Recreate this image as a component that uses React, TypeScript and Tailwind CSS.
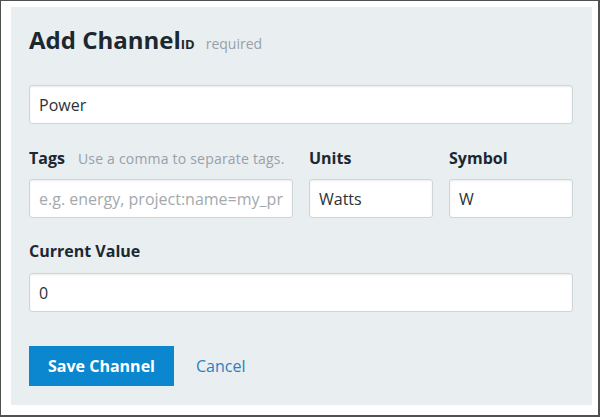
import React from "react";

const font = { fontFamily: "'Open Sans', Lato, sans-serif" };

export default function App() {
  const inputCls =
    "h-[39px] w-full rounded-[3px] border border-[#cfd4d8] bg-white px-[9px] text-[16px] text-[#2a3238] shadow-[inset_0_1px_2px_rgba(0,0,0,0.08)] outline-none placeholder:text-[#a3a9ad]";
  return (
    <div
      className="box-border h-[417px] w-[600px] border-l border-t border-r-2 border-b-2 border-[#505050] bg-white pl-[10px] pt-[6px] pr-[6px] pb-[10px]"
      style={font}
    >
      <div className="flex h-full flex-col bg-[#e9eef1] pl-[18px] pr-[19px] pt-[17px]">
        <div className="flex h-[32px] items-baseline leading-[32px]">
          <span className="text-[24px] font-bold text-[#1c2830]">Add Channel</span>
          <span className="text-[13px] font-bold text-[#1c2830]">ID</span>
          <span className="ml-[11px] text-[14px] text-[#98a1a8]">required</span>
        </div>
        <input className={`${inputCls} mt-[29px]`} defaultValue="Power" />
        <div className="mt-[22px] grid grid-cols-[264px_124px_124px] gap-x-4">
          <div className="flex flex-col">
            <div className="flex h-[24px] items-baseline leading-[24px]">
              <span className="text-[16px] font-bold text-[#1c2830]">Tags</span>
              <span className="ml-[13px] text-[14px] tracking-[0.2px] text-[#98a1a8]">Use a comma to separate tags.</span>
            </div>
            <input
              className={`${inputCls} mt-[9px]`}
              placeholder="e.g. energy, project:name=my_project"
            />
          </div>
          <div className="flex flex-col">
            <div className="text-[16px] font-bold leading-[24px] text-[#1c2830]">Units</div>
            <input className={`${inputCls} mt-[9px]`} defaultValue="Watts" />
          </div>
          <div className="flex flex-col">
            <div className="text-[16px] font-bold leading-[24px] text-[#1c2830]">Symbol</div>
            <input className={`${inputCls} mt-[9px]`} defaultValue="W" />
          </div>
        </div>
        <div className="mt-[21px] text-[16px] font-bold leading-[24px] text-[#1c2830]">Current Value</div>
        <input className={`${inputCls} mt-[10px]`} defaultValue="0" />
        <div className="mt-[34px] flex items-center">
          <button className="h-[40px] w-[145px] bg-[#0b87d0] text-[16px] font-bold text-white">
            Save Channel
          </button>
          <a className="ml-[22px] text-[16px] text-[#2b7fc2]">Cancel</a>
        </div>
      </div>
    </div>
  );
}
